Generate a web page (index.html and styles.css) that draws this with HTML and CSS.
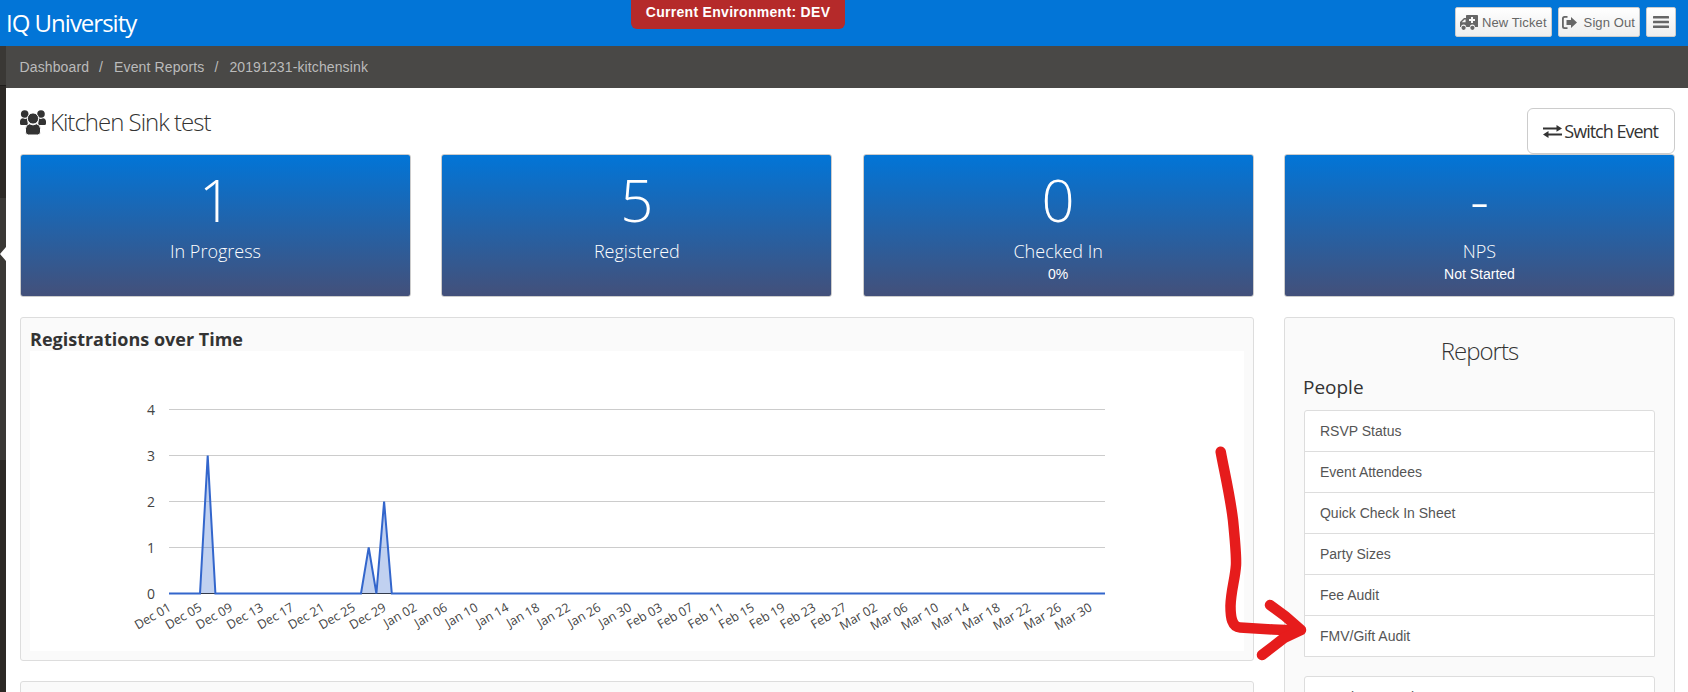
FILE: index.html
```html
<!DOCTYPE html>
<html lang="en">
<head>
    <meta charset="UTF-8">
    <meta name="viewport" content="width=device-width, initial-scale=1.0">
    <title>IQ University</title>
    <link rel="stylesheet" href="styles.css">
</head>
<body>
    <header class="topbar">
        <a class="brand">IQ University</a>
        <div class="env-badge">Current Environment: DEV</div>
        <div class="top-actions">
            <button class="top-button">
                <svg class="icon-ambulance" viewBox="0 0 18 15"><path fill-rule="evenodd" d="M0 9V7L4 3H6V.8A.8.8 0 0 1 6.8 0H17.2A.8.8 0 0 1 18 .8V11.5A.5.5 0 0 1 17.5 12H15A2.6 2.6 0 0 0 9.8 12H6.2A2.6 2.6 0 0 0 1 12H.5A.5.5 0 0 1 0 11.5ZM1.7 7.3H5.6V4.5H4.6ZM11 2V4H9V6H11V8H13V6H15V4H13V2Z"/><circle cx="3.6" cy="12.8" r="2.1"/><circle cx="12.4" cy="12.8" r="2.1"/></svg>
                New Ticket
            </button>
            <button class="top-button">
                <svg class="icon-signout" viewBox="0 0 15 13"><path d="M5.5 0H2.5A2.5 2.5 0 0 0 0 2.5V10.5A2.5 2.5 0 0 0 2.5 13H5.5V11.3H2.8A1 1 0 0 1 1.8 10.3V2.7A1 1 0 0 1 2.8 1.7H5.5Z"/><path d="M9 1 15 6.5 9 12V9H4.5V4H9Z"/></svg>
                Sign Out
            </button>
            <button class="top-button menu-button">
                <svg class="icon-bars" viewBox="0 0 16 12"><rect width="16" height="2.6" rx=".5"/><rect y="4.7" width="16" height="2.6" rx=".5"/><rect y="9.4" width="16" height="2.6" rx=".5"/></svg>
            </button>
        </div>
    </header>

    <div class="layout">
        <!-- Collapsed side menu -->
        <aside class="side-menu">
            <div class="side-top"></div>
            <div class="side-mid"><span class="side-arrow"></span></div>
        </aside>

        <div class="page">
            <nav class="breadcrumb">
                <a>Dashboard</a><span class="crumb-sep">/</span><a>Event Reports</a><span class="crumb-sep">/</span><a>20191231-kitchensink</a>
            </nav>

            <main class="content">
                <div class="title-row">
                    <h1 class="event-title">
                        <svg class="icon-users" viewBox="0 0 26 25"><circle cx="4.7" cy="4" r="3.8"/><circle cx="21" cy="4" r="3.8"/><path d="M0 11.5A3.5 3.5 0 0 1 3 8.2Q5 9.6 7 8.6L8 15H1.5A1.5 1.5 0 0 1 0 13.5Z"/><path d="M26 11.5A3.5 3.5 0 0 0 23 8.2Q21 9.6 19 8.6L18 15H24.5A1.5 1.5 0 0 0 26 13.5Z"/><circle class="gap" cx="13" cy="8.5" r="5.6"/><path class="gap" d="M5.5 18.5A5 5 0 0 1 9.5 13.8Q13 16 16.5 13.8A5 5 0 0 1 20.5 18.5V22A3 3 0 0 1 17.5 25H8.5A3 3 0 0 1 5.5 22Z"/></svg>
                        Kitchen Sink test
                    </h1>
                    <button class="switch-button">
                        <svg class="icon-exchange" viewBox="0 0 19 13"><path d="M0 2.6H13.5V0L19 3.4 13.5 6.8V4.4H0Z"/><path d="M19 8.4H5.5V6L0 9.6 5.5 13V10.4H19Z"/></svg>
                        Switch Event
                    </button>
                </div>

                <section class="stats">
                    <div class="stat-card">
                        <div class="stat-number">1</div>
                        <div class="stat-label">In Progress</div>
                    </div>
                    <div class="stat-card">
                        <div class="stat-number">5</div>
                        <div class="stat-label">Registered</div>
                    </div>
                    <div class="stat-card">
                        <div class="stat-number">0</div>
                        <div class="stat-label">Checked In</div>
                        <div class="stat-sub">0%</div>
                    </div>
                    <div class="stat-card">
                        <div class="stat-number">-</div>
                        <div class="stat-label">NPS</div>
                        <div class="stat-sub">Not Started</div>
                    </div>
                </section>

                <section class="columns">
                    <div class="left-column">
                        <div class="panel chart-panel">
                            <h3 class="chart-title">Registrations over Time</h3>
                            <svg class="chart" viewBox="30 351 1213.5 300" preserveAspectRatio="xMinYMin">
                                <g class="grid">
                                    <line x1="169" x2="1105" y1="409.5" y2="409.5"/>
                                    <line x1="169" x2="1105" y1="455.5" y2="455.5"/>
                                    <line x1="169" x2="1105" y1="501.5" y2="501.5"/>
                                    <line x1="169" x2="1105" y1="547.5" y2="547.5"/>
                                </g>
                                <line class="baseline" x1="169" x2="1105" y1="593.5" y2="593.5"/>
                                <path class="area" d="M200 593.5 207.7 455.5 215.4 593.5ZM361 593.5 368.7 547.5 376.4 593.5 384.1 501.5 391.8 593.5Z"/>
                                <path class="line" d="M169 593.5H200L207.7 455.5 215.4 593.5H361L368.7 547.5 376.4 593.5 384.1 501.5 391.8 593.5H1105"/>
                                <g class="y-labels">
                                    <text x="155" y="414.5">4</text>
                                    <text x="155" y="460.5">3</text>
                                    <text x="155" y="506.5">2</text>
                                    <text x="155" y="552.5">1</text>
                                    <text x="155" y="598.5">0</text>
                                </g>
                                <g class="x-labels">
                                    <text transform="translate(172 610) rotate(-30)">Dec 01</text>
                                    <text transform="translate(202.7 610) rotate(-30)">Dec 05</text>
                                    <text transform="translate(233.4 610) rotate(-30)">Dec 09</text>
                                    <text transform="translate(264.1 610) rotate(-30)">Dec 13</text>
                                    <text transform="translate(294.8 610) rotate(-30)">Dec 17</text>
                                    <text transform="translate(325.5 610) rotate(-30)">Dec 21</text>
                                    <text transform="translate(356.2 610) rotate(-30)">Dec 25</text>
                                    <text transform="translate(386.9 610) rotate(-30)">Dec 29</text>
                                    <text transform="translate(417.6 610) rotate(-30)">Jan 02</text>
                                    <text transform="translate(448.3 610) rotate(-30)">Jan 06</text>
                                    <text transform="translate(479 610) rotate(-30)">Jan 10</text>
                                    <text transform="translate(509.7 610) rotate(-30)">Jan 14</text>
                                    <text transform="translate(540.4 610) rotate(-30)">Jan 18</text>
                                    <text transform="translate(571.1 610) rotate(-30)">Jan 22</text>
                                    <text transform="translate(601.8 610) rotate(-30)">Jan 26</text>
                                    <text transform="translate(632.5 610) rotate(-30)">Jan 30</text>
                                    <text transform="translate(663.2 610) rotate(-30)">Feb 03</text>
                                    <text transform="translate(693.9 610) rotate(-30)">Feb 07</text>
                                    <text transform="translate(724.6 610) rotate(-30)">Feb 11</text>
                                    <text transform="translate(755.3 610) rotate(-30)">Feb 15</text>
                                    <text transform="translate(786 610) rotate(-30)">Feb 19</text>
                                    <text transform="translate(816.7 610) rotate(-30)">Feb 23</text>
                                    <text transform="translate(847.4 610) rotate(-30)">Feb 27</text>
                                    <text transform="translate(878.1 610) rotate(-30)">Mar 02</text>
                                    <text transform="translate(908.8 610) rotate(-30)">Mar 06</text>
                                    <text transform="translate(939.5 610) rotate(-30)">Mar 10</text>
                                    <text transform="translate(970.2 610) rotate(-30)">Mar 14</text>
                                    <text transform="translate(1000.9 610) rotate(-30)">Mar 18</text>
                                    <text transform="translate(1031.6 610) rotate(-30)">Mar 22</text>
                                    <text transform="translate(1062.3 610) rotate(-30)">Mar 26</text>
                                    <text transform="translate(1093 610) rotate(-30)">Mar 30</text>
                                </g>
                            </svg>
                        </div>
                        <div class="panel next-panel"></div>
                    </div>

                    <div class="panel reports-panel">
                        <h2 class="reports-title">Reports</h2>
                        <h4 class="reports-group">People</h4>
                        <ul class="report-list">
                            <li>RSVP Status</li>
                            <li>Event Attendees</li>
                            <li>Quick Check In Sheet</li>
                            <li>Party Sizes</li>
                            <li>Fee Audit</li>
                            <li>FMV/Gift Audit</li>
                        </ul>
                        <ul class="report-list">
                            <li>Session Overview</li>
                        </ul>
                    </div>
                </section>
            </main>
        </div>
    </div>

    <!-- Hand drawn annotation on top of the screenshot -->
    <svg class="red-arrow" viewBox="1210 440 100 225">
        <path d="M1220.7 451.7C1224 470 1230 495 1233 520 1235 540 1236.5 555 1236 565 1235 580 1231 590 1230.5 606 1230.5 618 1232 627 1240 627.5L1273 629.5 1298 630.5"/>
        <path d="M1270 605 1285 616 1301 630 1284 638 1262 655"/>
    </svg>
</body>
</html>
```

FILE: styles.css
```css
* {
    box-sizing: border-box;
}

html, body {
    height: 100%;
    overflow: hidden;
}

body {
    margin: 0;
    background: #fff;
    color: #333;
    font-family: 'Liberation Sans', sans-serif;
    font-size: 14px;
}

button {
    font-family: inherit;
}

/* Blue top bar */
.topbar {
    display: flex;
    align-items: flex-start;
    height: 46px;
    background-color: #0275d7;
}

.brand {
    width: 631px;
    padding: 8px 0 0 6px;
    color: #fff;
    font-family: 'Open Sans', sans-serif;
    font-size: 24px;
    line-height: 30px;
    letter-spacing: -1px;
}

.env-badge {
    width: 214px;
    height: 29px;
    background-color: #b52a2a;
    border-radius: 0 0 6px 6px;
    color: #fff;
    font-size: 14px;
    font-weight: bold;
    line-height: 24px;
    letter-spacing: 0.3px;
    text-align: center;
}

.top-actions {
    display: flex;
    gap: 6px;
    margin: 7px 12px 0 auto;
}

.top-button {
    display: flex;
    align-items: center;
    gap: 4px;
    height: 30px;
    padding: 0 4px;
    background: linear-gradient(#ffffff, #eeeeee);
    border: 1px solid #ccc;
    border-radius: 2px;
    color: #666;
    font-size: 13px;
    letter-spacing: 0.1px;
}

.top-button svg {
    fill: #666;
}

.icon-ambulance {
    width: 18px;
    height: 15px;
}

.icon-signout {
    width: 15px;
    height: 13px;
    margin: 0 3px 0 -1px;
}

.icon-bars {
    width: 16px;
    height: 12px;
}

.menu-button {
    width: 30px;
    padding: 0 0 0 6px;
}

/* Side menu is collapsed to a thin strip */
.layout {
    display: flex;
    height: calc(100% - 46px);
}

.side-menu {
    flex: none;
    width: 6px;
    background-color: #2c2926;
}

.side-top {
    height: 40px;
    background-color: #3a3835;
    border-bottom: 1px solid #1f1d1b;
}

.side-mid {
    display: flex;
    align-items: flex-start;
    height: 262px;
    margin-top: 112px;
    background-color: #3a3835;
}

.side-arrow {
    width: 0;
    height: 0;
    margin-top: 49px;
    border-top: 7px solid transparent;
    border-bottom: 7px solid transparent;
    border-right: 6px solid #fff;
}

.page {
    flex: 1;
    min-width: 0;
}

.breadcrumb {
    height: 42px;
    padding-left: 13.5px;
    background-color: #494846;
    color: #bbb;
    line-height: 43px;
    letter-spacing: 0.12px;
}

.crumb-sep {
    padding: 0 11px 0 10px;
}

.content {
    padding: 0 13px 0 14px;
}

.title-row {
    display: flex;
    align-items: flex-start;
    justify-content: space-between;
    height: 66px;
    padding-top: 20px;
}

.event-title {
    display: flex;
    align-items: center;
    gap: 4px;
    margin: 0;
    color: #333;
    font-family: 'Open Sans', sans-serif;
    font-size: 24px;
    font-weight: 300;
    line-height: 28px;
    letter-spacing: -1px;
}

.icon-users {
    width: 26px;
    height: 25px;
    fill: #333;
}

.icon-users .gap {
    stroke: #fff;
    stroke-width: 1;
}

.switch-button {
    display: flex;
    align-items: center;
    gap: 2px;
    height: 46px;
    padding: 0 16px 0 15px;
    background: #fff;
    border: 1px solid #ccc;
    border-radius: 6px;
    color: #333;
    font-family: 'Open Sans', sans-serif;
    font-size: 18px;
    letter-spacing: -1px;
}

.icon-exchange {
    width: 19px;
    height: 13px;
    fill: #333;
}

/* Four blue stat cards */
.stats {
    display: grid;
    grid-template-columns: repeat(4, 1fr);
    gap: 30.3px;
}

.stat-card {
    height: 143px;
    padding-top: 10px;
    background: linear-gradient(#0275d7, #43507a);
    border: 1px solid #ccc;
    border-radius: 3px;
    color: #fff;
    text-align: center;
}

.stat-number {
    height: 70px;
    font-family: 'Open Sans', sans-serif;
    font-size: 58px;
    font-weight: 300;
    line-height: 70px;
}

.stat-label {
    margin-top: 3px;
    font-family: 'Open Sans', sans-serif;
    font-size: 18px;
    font-weight: 300;
    line-height: 26px;
}

.stat-sub {
    font-size: 14px;
    line-height: 20px;
}

.columns {
    display: grid;
    grid-template-columns: repeat(4, 1fr);
    gap: 30.3px;
    margin-top: 20px;
}

.left-column {
    display: flex;
    flex-direction: column;
    gap: 20px;
    grid-column: span 3;
}

.panel {
    background-color: #fafafa;
    border: 1px solid #ddd;
    border-radius: 3px;
}

.chart-panel {
    height: 344px;
    padding: 9px;
}

.chart-title {
    margin: 0;
    color: #333;
    font-family: 'Open Sans', sans-serif;
    font-size: 18px;
    font-weight: bold;
    line-height: 24px;
}

.chart {
    display: block;
    width: 100%;
    height: 300px;
    background-color: #fff;
}

.grid line {
    stroke: #ccc;
    stroke-width: 1;
}

.baseline {
    stroke: #333;
    stroke-width: 1;
}

.area {
    fill: #3366cc;
    fill-opacity: 0.3;
}

.line {
    fill: none;
    stroke: #3366cc;
    stroke-width: 2;
}

.y-labels text {
    fill: #444;
    font-family: 'Open Sans', sans-serif;
    font-size: 14px;
    text-anchor: end;
}

.x-labels text {
    fill: #444;
    font-family: 'Open Sans', sans-serif;
    font-size: 12.5px;
    text-anchor: end;
}

.next-panel {
    height: 60px;
}

/* Reports column */
.reports-panel {
    height: 400px;
    padding: 0 19px;
}

.reports-title {
    margin: 18px 0 0;
    color: #333;
    font-family: 'Open Sans', sans-serif;
    font-size: 24px;
    font-weight: 300;
    line-height: 30px;
    letter-spacing: -1px;
    text-align: center;
}

.reports-group {
    margin: 9px 0 0 -1px;
    color: #333;
    font-family: 'Open Sans', sans-serif;
    font-size: 19px;
    font-weight: normal;
    line-height: 24px;
}

.report-list {
    margin: 11px 0 19px;
    padding: 0;
    background-color: #fff;
    border: 1px solid #ddd;
    border-radius: 3px 3px 0 0;
    list-style: none;
}

.report-list li {
    height: 41px;
    padding: 10px 15px;
    border-bottom: 1px solid #ddd;
    color: #555;
    line-height: 20px;
}

.report-list li:last-child {
    height: 40px;
    border-bottom: 0;
}

/* Red marker arrow laid over the page */
.red-arrow {
    position: absolute;
    left: 1210px;
    top: 440px;
    width: 100px;
    height: 225px;
    fill: none;
    stroke: #e61c1c;
    stroke-width: 10.5;
    stroke-linecap: round;
    stroke-linejoin: round;
}
```
